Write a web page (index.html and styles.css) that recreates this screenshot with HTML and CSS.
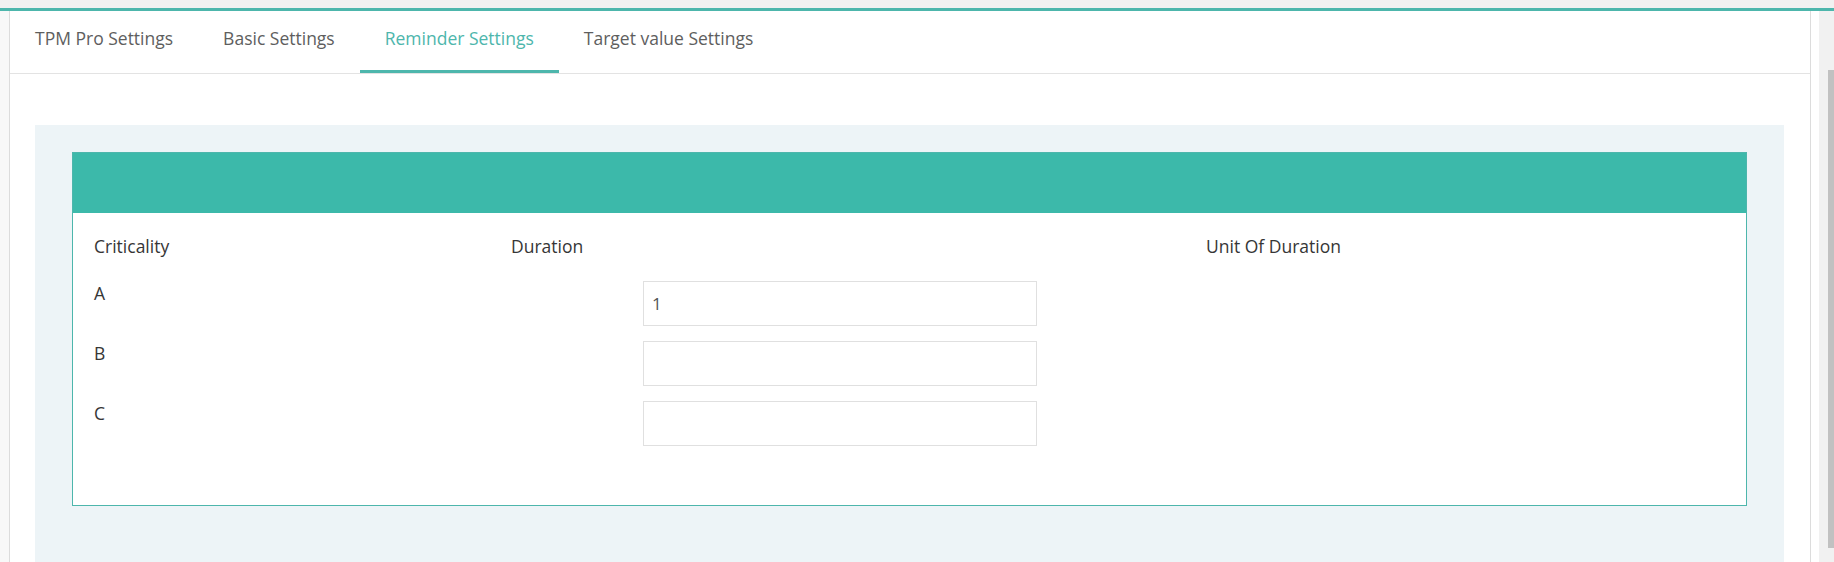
FILE: index.html
```html
<!DOCTYPE html>
<html lang="en">

<head>
    <meta charset="UTF-8">
    <meta name="viewport" content="width=device-width, initial-scale=1.0">
    <title>Reminder Settings</title>
    <link rel="stylesheet" href="styles.css">
</head>

<body>
    <div class="top-strip"></div>
    <div class="accent-line"></div>

    <div class="layout">
        <div class="gutter"></div>

        <div class="panel">
            <ul class="tabs">
                <li><a href="#">TPM Pro Settings</a></li>
                <li><a href="#">Basic Settings</a></li>
                <li class="active"><a href="#">Reminder Settings</a></li>
                <li><a href="#">Target value Settings</a></li>
            </ul>

            <div class="tab-content">
                <div class="card">
                    <div class="card-header"></div>
                    <div class="card-body">
                        <div class="grid-row grid-head">
                            <span>Criticality</span>
                            <span>Duration</span>
                            <span>Unit Of Duration</span>
                        </div>
                        <div class="grid-row">
                            <span>A</span>
                            <span><input type="text" value="1"></span>
                            <span></span>
                        </div>
                        <div class="grid-row">
                            <span>B</span>
                            <span><input type="text" value=""></span>
                            <span></span>
                        </div>
                        <div class="grid-row">
                            <span>C</span>
                            <span><input type="text" value=""></span>
                            <span></span>
                        </div>
                    </div>
                </div>
            </div>
        </div>

        <div class="side">
            <div class="scroll-track">
                <div class="scroll-thumb"></div>
            </div>
        </div>
    </div>
</body>

</html>
```

FILE: styles.css
```css
* {
    box-sizing: border-box;
}

html,
body {
    margin: 0;
    height: 100%;
    overflow: hidden;
}

body {
    font-family: "Open Sans", "Liberation Sans", sans-serif;
    font-size: 17.5px;
    color: #363636;
    background: #fff;
}

.top-strip {
    height: 8px;
    background: #f1f1f1;
}

.accent-line {
    height: 3px;
    background: #4db6ac;
}

.layout {
    display: flex;
    height: 551px;
}

.gutter {
    width: 9px;
    background: #f8f8f8;
}

.panel {
    flex: 1;
    background: #fff;
    border-left: 1px solid #dcdcdc;
    border-right: 1px solid #dcdcdc;
    display: flex;
    flex-direction: column;
}

.side {
    width: 23px;
    display: flex;
    justify-content: flex-end;
    background: #fff;
}

.scroll-track {
    width: 15px;
    background: #f1f1f1;
    padding-top: 59px;
    display: flex;
    justify-content: flex-end;
}

.scroll-thumb {
    width: 6px;
    height: 478px;
    background: #c1c1c1;
}

/* tabs */
.tabs {
    margin: 0;
    padding: 0;
    list-style: none;
    display: flex;
    border-bottom: 1px solid #e3e3e3;
}

.tabs a {
    display: block;
    padding: 15px 25px 20px;
    line-height: 24px;
    color: #5e5e5e;
    text-decoration: none;
    border-bottom: 3px solid transparent;
}

.tabs li.active a {
    color: #4db6ac;
    border-bottom-color: #4db6ac;
}

/* content */
.tab-content {
    flex: 1;
    margin: 51px 26px 0 25px;
    padding: 27px 37px 0;
    background: #edf4f7;
}

.card {
    background: #fff;
    border: 1px solid #4db6ac;
}

.card-header {
    height: 60px;
    background: #3cb9aa;
}

.card-body {
    padding: 21px 21px 59px;
    display: flex;
    flex-direction: column;
    gap: 15px;
}

.grid-row {
    display: grid;
    grid-template-columns: 417px 695px 1fr;
    line-height: 24px;
    height: 45px;
}

.grid-row.grid-head {
    height: 24px;
    margin-bottom: 8px;
}

.grid-row input {
    display: block;
    margin-left: 132px;
    width: 394px;
    height: 45px;
    padding: 0 8px;
    border: 1px solid #e0e0e0;
    font-family: inherit;
    font-size: 17px;
    color: #555;
    outline: none;
}
```
